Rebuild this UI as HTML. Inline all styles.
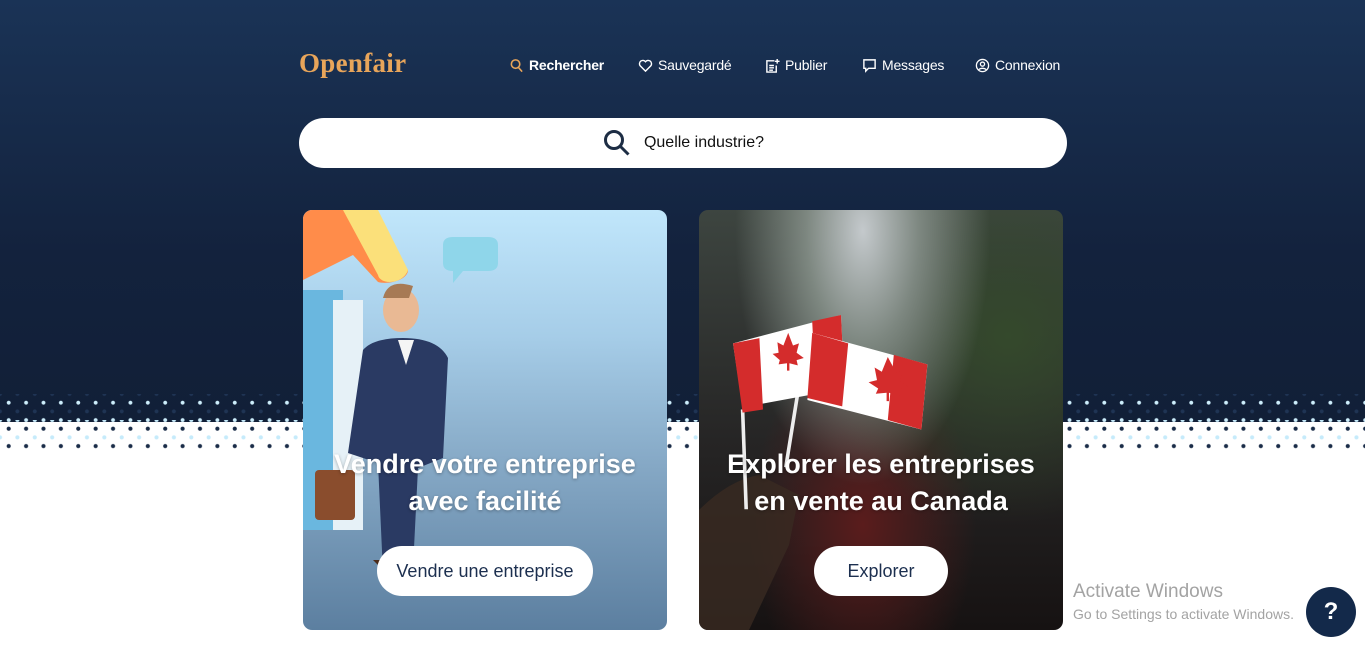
<!DOCTYPE html>
<html><head><meta charset="utf-8"><style>
*{margin:0;padding:0;box-sizing:border-box}
body{width:1365px;height:653px;overflow:hidden;background:#fff;font-family:"Liberation Sans","DejaVu Sans",sans-serif;position:relative}
.hero{position:absolute;left:0;top:0;width:1365px;height:422px;background:linear-gradient(#1a3356,#13223d 60%,#111f37)}
.dots1{position:absolute;left:0;top:394px;width:1365px;height:28px;
background-image:radial-gradient(circle,#cdeefc 1.7px,transparent 2.2px),radial-gradient(circle,#1f3454 1.7px,transparent 2.2px);
background-size:17.4px 17.4px;background-position:0 0,8.7px 8.7px;}
.dots2{position:absolute;left:0;top:420px;width:1365px;height:30px;
background-image:radial-gradient(circle,#1a2c48 1.8px,transparent 2.3px),radial-gradient(circle,#c6ebfb 1.8px,transparent 2.3px);
background-size:17.4px 17.4px;background-position:0 0,8.7px 8.7px;}
.logo{position:absolute;left:299px;top:48px;font-family:"Liberation Serif","DejaVu Serif",serif;font-size:27px;font-weight:bold;color:#e8a55a;letter-spacing:0.3px}
.nav{position:absolute;top:57px;color:#fff;font-size:14px;display:flex;align-items:center;gap:5px;letter-spacing:-0.2px}
.nav svg{width:15px;height:15px}
.search{position:absolute;left:299px;top:118px;width:768px;height:50px;border-radius:25px;background:#fff;display:flex;align-items:center;justify-content:center;font-size:16px;color:#111}
.card{position:absolute;top:210px;width:364px;height:420px;border-radius:9px;overflow:hidden}
.c1{left:303px;background:linear-gradient(#c0e6fb 0%,#a6cde8 30%,#86a9c6 60%,#5c7fa0 100%)}
.c2{left:699px;background:radial-gradient(ellipse at 45% 5%,#c4c9cc 0,#7d8780 20%,transparent 45%),radial-gradient(ellipse at 85% 30%,#34492c 0,transparent 45%),radial-gradient(ellipse at 45% 75%,#5a1c1c 0,transparent 40%),linear-gradient(#3d4540,#262525 55%,#161212)}
.title{position:absolute;left:0;width:364px;top:236px;text-align:center;color:#fff;font-size:27px;font-weight:bold;line-height:37px;text-shadow:0 1px 3px rgba(0,0,0,.3)}
.btn{position:absolute;top:336px;height:50px;border-radius:25px;background:#fff;color:#1c2f4f;font-size:18px;display:flex;align-items:center;justify-content:center}
.help{position:absolute;left:1306px;top:587px;width:50px;height:50px;border-radius:50%;background:#13294a;color:#fff;font-size:24px;font-weight:bold;display:flex;align-items:center;justify-content:center}
.win{position:absolute;left:1073px;color:#a3a3a3}
</style></head><body>
<div class="hero"></div>
<div class="dots1"></div><div class="dots2"></div>
<div class="logo">Openfair</div>
<div class="nav" style="left:509px;font-weight:bold"><svg viewBox="0 0 16 16" fill="none" stroke="#e8a55a" stroke-width="1.7"><circle cx="7" cy="6.5" r="4.5"/><path d="M10 10l4 4.5"/></svg>Rechercher</div>
<div class="nav" style="left:638px"><svg viewBox="0 0 16 16" fill="none" stroke="#fff" stroke-width="1.5"><path d="M8 14L2.3 8.3A3.3 3.3 0 0 1 8 4a3.3 3.3 0 0 1 5.7 4.3z"/></svg>Sauvegardé</div>
<div class="nav" style="left:765px"><svg viewBox="0 0 16 16" fill="none" stroke="#fff" stroke-width="1.5"><path d="M10 3H2v12h10V8"/><path d="M4.5 8h5M4.5 10.5h5M4.5 13h4M13 1v5M10.5 3.5h5"/></svg>Publier</div>
<div class="nav" style="left:862px"><svg viewBox="0 0 16 16" fill="none" stroke="#fff" stroke-width="1.5"><path d="M2 2h12v9H7l-3 3v-3H2z"/></svg>Messages</div>
<div class="nav" style="left:975px"><svg viewBox="0 0 16 16" fill="none" stroke="#fff" stroke-width="1.4"><circle cx="8" cy="8" r="6.5"/><circle cx="8" cy="6.5" r="2.2"/><path d="M4.3 12.5c1-2 6.4-2 7.4 0"/></svg>Connexion</div>
<div class="search"><svg width="30" height="30" viewBox="0 0 30 30" fill="none" stroke="#1d2d44" stroke-width="3"><circle cx="12" cy="12" r="8.5"/><path d="M18.5 18.5l8 8"/></svg><span style="margin-left:12px">Quelle industrie?</span></div>

<div class="card c1">
<svg width="364" height="420" style="position:absolute;left:0;top:0">
<path d="M0 0h60l45 60c0 10-20 15-30 12L50 45 0 70z" fill="#ff8c4a"/>
<path d="M40 0h35l30 60c-5 15-28 15-30 5z" fill="#fbe07a"/>
<rect x="0" y="80" width="40" height="240" fill="#6ab7df"/>
<rect x="30" y="90" width="30" height="230" fill="#e6f1f7"/>
<path d="M140 35q0-8 10-8h35q10 0 10 8v18q0 8-10 8h-25l-10 12v-12q-10 0-10-8z" fill="#8fd6ea"/>
<ellipse cx="98" cy="100" rx="18" ry="22" fill="#e9b994"/>
<path d="M80 88q5-20 30-12l-4 12z" fill="#a77a55"/>
<path d="M60 140q10-12 40-12 35 0 45 20l-5 100-25 10-5 100-30 5-5-110-30-10z" fill="#2a3a63"/>
<path d="M95 130l8 25 8-25z" fill="#f5f5f5"/>
<rect x="12" y="260" width="40" height="50" rx="4" fill="#8a4d2d"/>
<path d="M70 350l30 30h30l-15-30z" fill="#4a2b1a"/>
</svg>
<div class="title">Vendre votre entreprise<br>avec facilité</div>
<div class="btn" style="left:74px;width:216px">Vendre une entreprise</div>
</div>

<div class="card c2">
<svg width="364" height="420" style="position:absolute;left:0;top:0">
<path d="M0 420V300q30-30 60-35l40 20-10 50-40 85z" fill="#3a2a22" opacity=".8"/>
<g transform="translate(34 105) scale(1.2 1.05) translate(-34 -105)">
<path d="M42 195l3 95M90 165l-12 85" stroke="#eee" stroke-width="3"/>
<path d="M34 132l90-27 3 70-85 18z" fill="#fff"/>
<path d="M34 132l22-5 3 68-17 3zM100 111l24-6 3 70-24 5z" fill="#d42c2c"/>
<path d="M100 122l96 30-5 62-95-28z" fill="#fff"/>
<path d="M100 122l30 10-5 60-29-8zM168 143l28 9-5 62-28-9z" fill="#d42c2c"/>
<path d="M163 145l-5 14-6-4 2 12-7 2 8 6-2 5 9-1 0 8 2 0 0-8 9 3-1-6 8-3-7-5 3-11-6 3z" fill="#d42c2c"/>
<path d="M80 122l-4 12-5-3 1 10-5 1 6 6-1 4 7-1 0 7h2l0-7 7 2-1-5 6-2-6-5 2-9-5 2z" fill="#d42c2c"/>
</g>
</svg>
<div class="title">Explorer les entreprises<br>en vente au Canada</div>
<div class="btn" style="left:115px;width:134px">Explorer</div>
</div>

<div class="win" style="top:581px;font-size:19px">Activate Windows</div>
<div class="win" style="top:606px;font-size:14px">Go to Settings to activate Windows.</div>
<div class="help">?</div>
</body></html>
